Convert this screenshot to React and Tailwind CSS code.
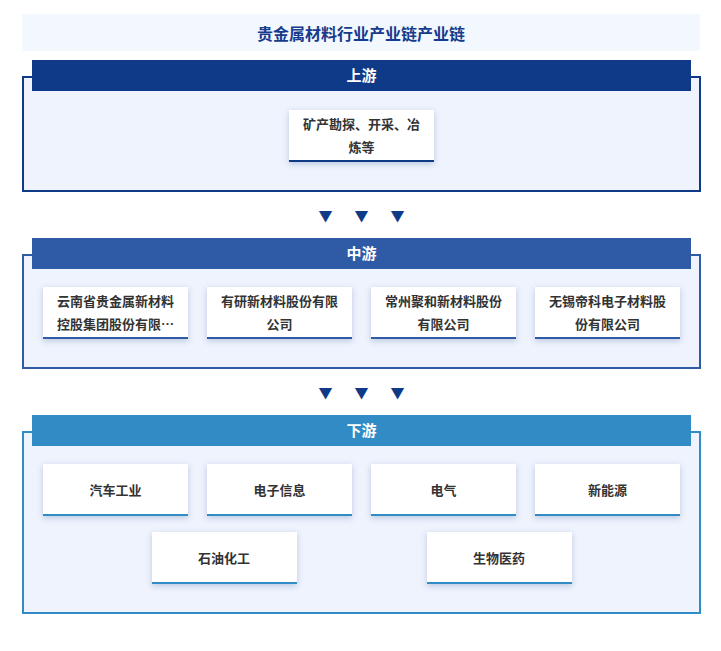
const font = { fontFamily: '"Noto Sans CJK SC", "Liberation Sans", sans-serif' };

function Card({ text, color }) {
  return (
    <div
      className="w-[145px] h-[52px] bg-white flex items-center justify-center text-center px-2 text-[13px] font-bold leading-[23px] text-[#333] shadow-[0_2px_6px_rgba(40,70,140,0.25)] border-b-2"
      style={{ borderBottomColor: color }}
    >
      <span className="line-clamp-2">{text}</span>
    </div>
  );
}

function Section({ title, color, children, bodyClass }) {
  return (
    <div className="pt-[16px]">
      <div className="border-2 bg-[#eef3fd]" style={{ borderColor: color }}>
        <div
          className="-mt-[18px] mx-[8px] h-[31px] flex items-center justify-center text-white text-[15px] font-bold"
          style={{ backgroundColor: color }}
        >
          {title}
        </div>
        <div className={bodyClass}>{children}</div>
      </div>
    </div>
  );
}

function Arrows() {
  return (
    <div className="h-[46px] flex items-center justify-center gap-[22px] text-[#0e3a87] text-[14px]">
      <span>▼</span>
      <span>▼</span>
      <span>▼</span>
    </div>
  );
}

export default function App() {
  const mid = ["云南省贵金属新材料控股集团股份有限公司", "有研新材料股份有限公司", "常州聚和新材料股份有限公司", "无锡帝科电子材料股份有限公司"];
  const down = ["汽车工业", "电子信息", "电气", "新能源"];
  return (
    <div className="w-[721px] h-[651px] bg-white pt-[14px] px-[22px]" style={font}>
      <div className="w-[678px] h-[37px] bg-[#f3f7fe] flex items-center justify-center text-[16px] font-bold text-[#163a8c]">
        贵金属材料行业产业链产业链
      </div>
      <div className="w-[679px] mt-[9px]">
        <Section title="上游" color="#0e3a87" bodyClass="flex justify-center pt-[19px] pb-[28px]">
          <Card text="矿产勘探、开采、冶炼等" color="#0e3a87" />
        </Section>
        <Arrows />
        <Section title="中游" color="#2f5ba6" bodyClass="grid grid-cols-4 gap-x-[19px] px-[19px] pt-[18px] pb-[28px]">
          {mid.map((t) => (
            <Card key={t} text={t} color="#2f5ba6" />
          ))}
        </Section>
        <Arrows />
        <Section title="下游" color="#318bc4" bodyClass="grid grid-cols-4 gap-x-[19px] gap-y-[16px] px-[19px] pt-[18px] pb-[28px]">
          {down.map((t) => (
            <Card key={t} text={t} color="#318bc4" />
          ))}
          <div className="col-span-4 flex justify-center gap-[130px]">
            <Card text="石油化工" color="#318bc4" />
            <Card text="生物医药" color="#318bc4" />
          </div>
        </Section>
      </div>
    </div>
  );
}
